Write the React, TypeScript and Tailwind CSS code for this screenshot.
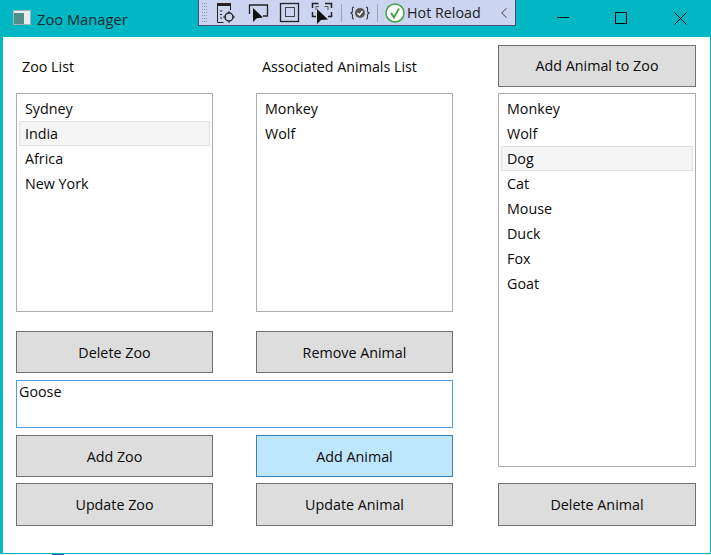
import React from 'react';
import { ChevronLeft } from 'lucide-react';

const zoos = ['Sydney', 'India', 'Africa', 'New York'];
const associated = ['Monkey', 'Wolf'];
const animals = ['Monkey', 'Wolf', 'Dog', 'Cat', 'Mouse', 'Duck', 'Fox', 'Goat'];

function ListBox({ items, selected, className }: { items: string[]; selected?: string; className: string }) {
  return (
    <div className={`border border-[#abadb3] bg-white p-[2px] ${className}`}>
      {items.map((item) => (
        <div
          key={item}
          className={`h-[25px] border pl-[5px] leading-[23px] ${
            item === selected ? 'border-[#e0e0e0] bg-[#f5f5f5]' : 'border-transparent'
          }`}
        >
          {item}
        </div>
      ))}
    </div>
  );
}

function Btn({ label, active, className }: { label: string; active?: boolean; className: string }) {
  return (
    <div
      className={`flex w-full items-center justify-center border ${className} ${
        active ? 'border-[#3c7fb1] bg-[#bee6fd]' : 'border-[#707070] bg-[#dddddd]'
      }`}
    >
      {label}
    </div>
  );
}

function Toolbar() {
  return (
    <div className="ml-[198px] flex h-[26px] w-[318px] items-center border border-t-0 border-[#4b4b7a] bg-[#ccd5f0]">
      <svg width="8" height="22" viewBox="0 0 8 22" className="ml-[2px]" fill="#8f93a8">
        {[1, 4, 7, 10, 13, 16, 19].map((y) => (
          <g key={y}>
            <rect x="1" y={y} width="1" height="1" />
            <rect x="3" y={y} width="1" height="1" />
            <rect x="5" y={y} width="1" height="1" />
          </g>
        ))}
      </svg>
      <svg width="22" height="22" viewBox="0 0 22 22" className="ml-[6px]" fill="none" stroke="#222">
        <path d="M2.500 2v18.500h6M15.500 2v6" />
        <path d="M2 2.500h14" strokeWidth="3" />
        <path d="M5 9h2M5 12.500h2M5 16h2" />
        <circle cx="14" cy="15" r="4" strokeWidth="1.500" />
        <path d="M14 9v2.500M14 18.500V21M8 15h2.500M17.500 15H20" />
      </svg>
      <svg width="22" height="22" viewBox="0 0 22 22" className="ml-[10px]" fill="none" stroke="#222">
        <path d="M2.500 12V3h18v11H16" strokeWidth="1.300" />
        <path d="M6 6v14l3.700-3.700 6.300-.8z" fill="#111" stroke="none" />
      </svg>
      <svg width="22" height="22" viewBox="0 0 22 22" className="ml-[10px]" fill="none">
        <rect x="1.500" y="1.500" width="18" height="18" stroke="#222" strokeWidth="1.300" />
        <rect x="6.500" y="5.500" width="9" height="9" stroke="#444" />
      </svg>
      <svg width="22" height="22" viewBox="0 0 22 22" className="ml-[10px]" fill="none" stroke="#222">
        <path d="M1.500 6V1.500h6M14 1.500h6.500V6M1.500 10v4.500h3.500M20.500 10v4.500H17" strokeWidth="1.500" />
        <path d="M5 8V4.500h3M13.500 4.500H17V8" stroke="#555" />
        <path d="M6 7v15l4-4 7-.5z" fill="#111" stroke="none" />
      </svg>
      <div className="ml-[8px] h-[18px] w-px bg-[#9aa3c0]" />
      <svg width="20" height="18" viewBox="0 0 20 18" className="ml-[8px]" fill="none">
        <path d="M4 3c-2 0-1.500 2-1.500 3.500S2.500 8.500 1 9c1.500.5 1.500 1 1.500 2.500S2 15 4 15M16 3c2 0 1.500 2 1.500 3.500s0 2 1.500 2.500c-1.500.5-1.500 1-1.500 2.500S18 15 16 15" stroke="#333" strokeWidth="1.100" />
        <circle cx="10" cy="9" r="5" fill="#555" />
        <path d="M7.500 9l2 2 3-4" stroke="#fff" strokeWidth="1.300" />
      </svg>
      <div className="ml-[7px] h-[18px] w-px bg-[#9aa3c0]" />
      <svg width="20" height="20" viewBox="0 0 20 20" className="ml-[7px]" fill="none">
        <circle cx="10" cy="10" r="9" fill="#fff" stroke="#3fa045" strokeWidth="1.500" />
        <path d="M6 10l3 4.500 5-9" stroke="#3fa045" strokeWidth="1.800" />
      </svg>
      <span className="ml-[2px] text-[#222]">Hot Reload</span>
      <ChevronLeft size={18} strokeWidth={1.25} className="ml-[14px] text-[#333]" />
    </div>
  );
}

export default function App() {
  return (
    <div className="h-[555px] w-[711px] overflow-hidden bg-[#00b7c3] font-['Open_Sans','Noto_Sans',sans-serif] text-[14.3px] text-[#0a0a0a]">
      <div className="relative flex h-[37px]">
        <div className="absolute left-[13px] top-[10px] flex h-[15px] w-[18px] border border-[#9fb0b8] bg-[#e8eef0]">
          <div className="mt-[2px] h-[11px] w-[10px] bg-[#4f8d86]" />
        </div>
        <span className="absolute left-[37px] top-[9px] text-[14.7px] leading-[20px] text-[#102a30]">Zoo Manager</span>
        <Toolbar />
        <div className="absolute left-[557px] top-[17px] h-px w-[12px] bg-black" />
        <svg width="13" height="13" viewBox="0 0 13 13" className="absolute left-[614px] top-[11px]" fill="none" stroke="#000">
          <rect x="1.500" y="1.500" width="11" height="11" />
        </svg>
        <svg width="13" height="13" viewBox="0 0 13 13" className="absolute left-[674px] top-[12px]" stroke="#000">
          <path d="M.5.5l12 12M12.500.5l-12 12" />
        </svg>
      </div>
      <div className="ml-[3px] flex h-[516px] w-[707px] bg-white pl-[13px] pt-[8px]">
        <div className="flex w-[437px] flex-col">
          <div className="flex h-[48px] gap-[43px] pt-[12px] leading-[20px]">
            <span className="w-[197px] pl-[6px]">Zoo List</span>
            <span className="w-[197px] pl-[6px]">Associated Animals List</span>
          </div>
          <div className="flex gap-[43px]">
            <div className="flex w-[197px] flex-col gap-[19px]">
              <ListBox items={zoos} selected="India" className="h-[219px]" />
              <Btn label="Delete Zoo" className="h-[42px] pt-[1px]" />
            </div>
            <div className="flex w-[197px] flex-col gap-[19px]">
              <ListBox items={associated} className="h-[219px]" />
              <Btn label="Remove Animal" className="h-[42px] pt-[1px]" />
            </div>
          </div>
          <div className="mt-[7px] h-[48px] border border-[#569de5] pl-[2px] pt-[1px] leading-[20px]">Goose</div>
          <div className="mt-[7px] grid grid-cols-[197px_197px] gap-x-[43px] gap-y-[6px]">
            <Btn label="Add Zoo" className="h-[42px] pt-[1px]" />
            <Btn label="Add Animal" active className="h-[42px] pt-[1px]" />
            <Btn label="Update Zoo" className="h-[43px]" />
            <Btn label="Update Animal" className="h-[43px]" />
          </div>
        </div>
        <div className="ml-[45px] flex w-[198px] flex-col">
          <Btn label="Add Animal to Zoo" className="h-[42px]" />
          <ListBox items={animals} selected="Dog" className="mt-[6px] h-[374px]" />
          <Btn label="Delete Animal" className="mt-[16px] h-[43px]" />
        </div>
      </div>
      <div className="mt-[1px] h-px w-full bg-[#f0f0f0]">
        <div className="ml-[52px] h-px w-[12px] bg-[#2b5fa8]" />
      </div>
    </div>
  );
}
